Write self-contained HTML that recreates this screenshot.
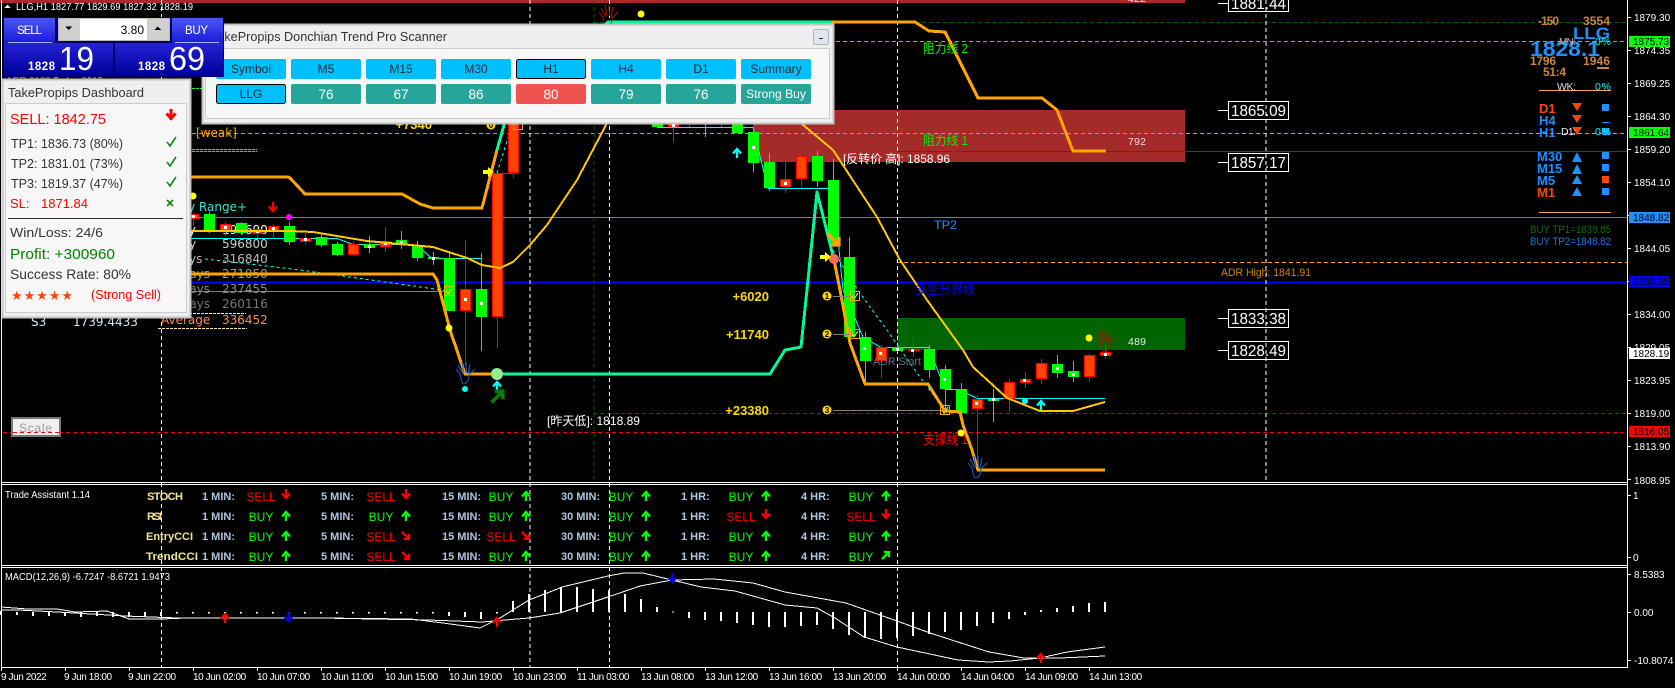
<!DOCTYPE html>
<html lang="en"><head><meta charset="utf-8"><title>LLG,H1 chart</title>
<style>
html,body{margin:0;padding:0;background:#000;width:1675px;height:688px;overflow:hidden}
svg{display:block;shape-rendering:crispEdges;font-family:"Liberation Sans","Noto Sans CJK SC",sans-serif}
.ax{font-size:10px;fill:#fff}
.tm{font-size:10px;fill:#fff;letter-spacing:-.42px}
.dj{font-family:"DejaVu Sans",sans-serif;font-size:12px}
.lb{font-size:11px;font-weight:bold;fill:#f0e68c}
.mn{font-size:11px;font-weight:bold;fill:#b0c4de}
.b{font-size:12px;fill:#00ff00;text-anchor:middle}
.s{font-size:12px;fill:#ff0000;text-anchor:middle}
.box{font-size:16px;fill:#fff}
.pf{font-size:12px;font-weight:bold;fill:#cd853f}
.tf{font-size:13px;font-weight:bold}
.gy{font-size:13px;font-weight:bold;fill:#ffd700;text-anchor:end}
.bt{font-size:12px;fill:#1c2c30;text-anchor:middle}
.bn{font-size:13.5px;fill:#fff;text-anchor:middle}
.d{font-size:13px;fill:#333}
</style></head>
<body>
<svg xmlns="http://www.w3.org/2000/svg" width="1675" height="688" viewBox="0 0 1675 688">
<defs>
<path id="u" fill="none" stroke-width="2.300" d="M0 5V-4M-4 .5L0 -4L4 .5"/>
<path id="d" fill="none" stroke-width="2.300" d="M0 -5V4M-4 -.5L0 4L4 -.5"/>
<path id="dr" fill="none" stroke-width="2.300" d="M-4 -4L3 3M3 -2V3H-2"/>
<path id="ur" fill="none" stroke-width="2.300" d="M-4 4L3 -3M-2 -3H3V2"/>
<path id="hand" fill="none" stroke-width="1" d="M-7 -7L-2 2M-3 -10L-1 1M1 -10L1.500 1M5 -8L3 2M10 -3L4 3C4 8 2 12 -2 12C-4 10 -4 5 -5 2L-9 -3"/>
</defs>
<rect width="1675" height="688" fill="#000"/>

<!-- zones -->
<rect x="0" y="0" width="1185" height="3" fill="#a52a2a"/>
<rect x="753" y="110" width="432" height="52" fill="#a52a2a"/>
<rect x="897" y="318" width="288" height="32" fill="#006400"/>

<!-- horizontal lines -->
<g fill="none" stroke-width="1">
<path d="M593 22.500H1627M593 413.500H1627" stroke="#006400" stroke-dasharray="4 3"/>
<path d="M3 41.500H1627M3 133.500H1627" stroke="#32e632" stroke-dasharray="4 3"/>
<path d="M192 88.500H202M192 149.500H257M192 151.500H257" stroke="#32e632" stroke-dasharray="3 1"/>
<path d="M897 151.500H1627" stroke="#006400"/>
<path d="M3 217.500H1627" stroke="#1e90ff"/>
<path d="M897 262.500H1627" stroke="#ffa500" stroke-dasharray="4 3"/>
<path d="M3 282.500H1627" stroke="#0000ff" stroke-width="2"/>
<path d="M192 291.500H449" stroke="#808080"/>
<path d="M3 432.500H1627" stroke="#ff0000" stroke-dasharray="4 3"/>
<path d="M594 0V482M897.500 0V482" stroke="#006400" stroke-dasharray="4 3"/>
</g>

<!-- left stats -->
<g class="dj">
<text x="247" y="211" text-anchor="end" fill="#40e0d0">Daily Range+</text>
<text x="196" y="137" fill="#ffa500">[weak]</text>
<text x="161" y="234" fill="#fff">Today</text><text x="222" y="234" fill="#fff">194600</text>
<text x="161" y="248" fill="#ccc">1 Day</text><text x="222" y="248" fill="#ccc">596800</text>
<text x="161" y="263" fill="#bbb">5 Days</text><text x="222" y="263" fill="#bbb">316840</text>
<text x="161" y="278" fill="#999">10 Days</text><text x="222" y="278" fill="#999">271050</text>
<text x="161" y="293" fill="#888">20 Days</text><text x="222" y="293" fill="#888">237455</text>
<text x="161" y="308" fill="#777">30 Days</text><text x="222" y="308" fill="#777">260116</text>
<text x="161" y="324" fill="#ff8c50">Average</text><text x="222" y="324" fill="#ff8c50">336452</text>
<text x="31" y="326" fill="#d4e6f1">S3</text><text x="73" y="326" fill="#d4e6f1">1739.4433</text>
</g>
<path d="M161 313.500H246M158 328.500H247" stroke="#ffe4b5" stroke-dasharray="3 1" fill="none"/>

<!-- dashed vertical whites -->
<path d="M161.500 0V667M530 0V667M609.500 0V667M897.500 0V667M1266 0V482" stroke="#fff" stroke-dasharray="4 3" fill="none"/>

<!-- cyan lines -->
<path fill="none" stroke="#00ffff" d="M180 238.500H337L353 244.500H413L420 248L432 258.500H481M657 127.500H753L768 188.500H833L843 290L863 337L881 347.500H929L945 389.500H960L977 398.500H1105"/>
<path fill="none" stroke="#ff0000" d="M497 173.500H518"/>
<path fill="none" stroke="#00ffff" stroke-dasharray="3 3" d="M205 259L233 262L300 270L449 291M497 173L512 125M833 250L853 283L870 307L887 330L903 353L922 380L945 410"/>

<!-- candle wicks -->
<path fill="none" stroke="#00ff00" d="M209.500 212V233M241.500 222V235M289.500 222V245M321.500 233V247M337.500 242V256M369.500 236V253M401.500 231V249M417.500 241V261M433.500 252V265M449.500 253V311M481.500 253V351M705.500 100V137M753.500 132V172M769.500 153V191M817.500 151V187M833.500 159V243M849.500 237V337M865.500 332V383M897.500 345V352M929.500 345V378M945.500 365V410M961.500 383V413M993.500 389V422M1057.500 355V378M1073.500 361V382"/>
<path fill="none" stroke="#ff0000" d="M193.500 212V226M225.500 222V236M257.500 226V238M273.500 224V239M305.500 233V245M353.500 241V256M385.500 227V252M465.500 240V366M497.500 173V348M513.500 100V178M673.500 115V143M689.500 100V127M721.500 100V127M785.500 162V193M801.500 153V187M881.500 345V378M913.500 336V357M977.500 395V470M1009.500 379V412M1025.500 372V388M1041.500 359V384M1089.500 353V382M1105.500 343V359"/>
<!-- candle bodies -->
<path fill="#00ff00" d="M204 214h11v17h-11zM236 223h11v10h-11zM284 226h11v16h-11zM316 237h11v8h-11zM332 244h11v11h-11zM364 244h11v4h-11zM396 240h11v5h-11zM412 246h11v12h-11zM428 257h11v2h-11zM444 258h11v53h-11zM476 289h11v28h-11zM652 100h11v27h-11zM732 100h11v33h-11zM748 132h11v31h-11zM764 162h11v26h-11zM812 156h11v25h-11zM828 180h11v63h-11zM844 257h11v80h-11zM860 337h11v24h-11zM892 347h11v4h-11zM924 349h11v21h-11zM940 369h11v20h-11zM956 389h11v24h-11zM988 399h11v2h-11zM1052 364h11v9h-11zM1068 371h11v6h-11z"/>
<path fill="#ff4500" stroke="#ff0000" d="M188.500 214.500h10v4h-10zM220.500 224.500h10v6h-10zM252.500 229.500h10v4h-10zM268.500 226.500h10v4h-10zM300.500 238.500h10v3h-10zM348.500 244.500h10v10h-10zM380.500 241.500h10v5h-10zM460.500 289.500h10v21h-10zM492.500 173.500h10v143h-10zM508.500 100.500h10v72h-10zM668.500 115.500h10v11h-10zM780.500 179.500h10v7h-10zM796.500 156.500h10v22h-10zM876.500 347.500h10v13h-10zM908.500 349.500h10v1h-10zM972.500 399.500h10v9h-10zM1004.500 382.500h10v16h-10zM1020.500 379.500h10v3h-10zM1036.500 363.500h10v15h-10zM1084.500 355.500h10v21h-10zM1100.500 352.500h10v3h-10z"/>
<!-- white dots -->
<path fill="#fff" d="M192 215h3v3h-3zM224 226h3v3h-3zM256 230h3v3h-3zM272 227h3v3h-3zM304 238h3v3h-3zM368 245h3v3h-3zM384 242h3v3h-3zM400 241h3v3h-3zM432 257h3v3h-3zM464 298h3v3h-3zM480 302h3v3h-3zM672 124h3v3h-3zM752 146h3v3h-3zM784 182h3v3h-3zM863 347h3v3h-3zM879 352h3v3h-3zM896 348h3v3h-3zM911 349h3v3h-3zM943 378h3v3h-3zM975 402h3v3h-3zM992 398h3v3h-3zM1023 379h3v3h-3zM1056 367h3v3h-3zM1072 373h3v3h-3zM1104 353h3v3h-3z"/>

<!-- thick indicator lines -->
<g fill="none" stroke-linejoin="round">
<polyline stroke="#ffc800" stroke-width="2" points="180,231 290,231 313,232 367,241 433,247 467,258 482,265 500,268 513,262 530,245 547,225 577,180 607,123 640,70 670,40"/>
<polyline stroke="#ffc800" stroke-width="2" points="802,124 833,150 877,217 900,260 927,300 963,350 973,367 1007,398 1040,411 1073,411 1105,402"/>
<polyline stroke="#ffa500" stroke-width="3" points="180,177 288,177 290,178 305,194 402,194 420,204 433,208 482,208 497,150"/>
<polyline stroke="#00fa9a" stroke-width="3" points="497,150 504,125 520,60 560,30 604,26 608,22 832,22"/>
<polyline stroke="#ffa500" stroke-width="3" points="832,22 915,22 929,31 945,32 978,98 1042,98 1057,110 1073,151 1106,151"/>
<polyline stroke="#ffa500" stroke-width="3" points="180,274 433,274 437,280 450,330 465,374 497,374"/>
<polyline stroke="#00fa9a" stroke-width="3" points="497,374 770,374 785,350 801,347 808,280 817,192 834,260"/>
<polyline stroke="#ffa500" stroke-width="3" points="834,260 840,290 850,343 865,384 928,384 945,411 960,412 963,425 972,450 978,470 1105,470"/>
</g>

<!-- markers -->
<g shape-rendering="auto">
<circle cx="193" cy="196" r="3.500" fill="#ffff00"/>
<circle cx="289" cy="217" r="3" fill="#ff00ff"/>
<circle cx="449" cy="328" r="3.500" fill="#ffff00"/>
<circle cx="465" cy="389" r="3" fill="#00ffff"/>
<circle cx="497" cy="374" r="6" fill="#90ee90"/>
<circle cx="641" cy="14" r="3.500" fill="#ffff00"/>
<circle cx="834" cy="259" r="5" fill="#fa6a5a"/>
<circle cx="961" cy="433" r="3.500" fill="#ffff00"/>
<circle cx="1025" cy="401" r="3" fill="#00ffff"/>
<circle cx="1089" cy="338" r="3.500" fill="#ffff00"/>
<use href="#d" x="273" y="207" stroke="#ff0000"/>
<use href="#u" x="497" y="386" stroke="#00ffff"/>
<use href="#u" x="737" y="153" stroke="#00ffff"/>
<use href="#u" x="1041" y="405" stroke="#00ffff"/>
<g transform="translate(498 396) scale(1.600)"><use href="#ur" stroke="#0a7a0a"/></g>
<g transform="translate(834 240) scale(1.600)"><use href="#dr" stroke="#ffa500"/></g>
<path d="M483 170h5v-3l6 5l-6 5v-3h-5z" fill="#ffff00"/>
<path d="M820 255h5v-3l6 5l-6 5v-3h-5z" fill="#ffff00"/>
<use href="#hand" x="465" y="372" stroke="#1e5fd0"/>
<use href="#hand" x="977" y="466" stroke="#1e5fd0"/>
<use href="#hand" x="1105" y="340" stroke="#b01a00"/>
<use href="#hand" x="608" y="15" stroke="#b01a00"/>
</g>
<!-- numbered + check markers -->
<path d="M833 296.500H850M833 334.500H850M833 410.500H945" stroke="#808080" fill="none"/>
<g fill="none" stroke="#ffa500">
<rect x="850.500" y="291.500" width="9" height="9"/><rect x="850.500" y="329.500" width="9" height="9"/><rect x="940.500" y="405.500" width="9" height="9"/>
<rect x="444.500" y="286.500" width="9" height="9" stroke="#c8c800"/><rect x="513.500" y="120.500" width="9" height="9"/>
</g>
<path fill="none" stroke="#e8e800" d="M852 296l2 3l4 -6M852 334l2 3l4 -6M942 410l2 3l4 -6M446 291l2 3l4 -6"/>
<g shape-rendering="auto">
<circle cx="827" cy="296" r="4.500" fill="#ffd700"/><circle cx="827" cy="334" r="4.500" fill="#ffd700"/><circle cx="827" cy="410" r="4.500" fill="#ffd700"/><circle cx="491" cy="125" r="4.500" fill="#ffd700"/>
</g>
<g font-size="8" font-weight="bold" fill="#000" text-anchor="middle">
<text x="827" y="299">1</text><text x="827" y="337">2</text><text x="827" y="413">3</text><text x="491" y="128">0</text>
</g>
<text x="769" y="301" class="gy">+6020</text>
<text x="769" y="339" class="gy">+11740</text>
<text x="769" y="415" class="gy">+23380</text>
<text x="432" y="129" class="gy">+7340</text>

<!-- chart labels -->
<text x="923" y="53" font-size="13" fill="#00f000" textLength="45" lengthAdjust="spacingAndGlyphs">阻力线 2</text>
<text x="923" y="145" font-size="13" fill="#00f000" textLength="45" lengthAdjust="spacingAndGlyphs">阻力线 1</text>
<text x="843" y="163" font-size="12" fill="#fff" textLength="107" lengthAdjust="spacingAndGlyphs">[反转价 高]: 1858.96</text>
<text x="547" y="425" font-size="12" fill="#fff" textLength="93" lengthAdjust="spacingAndGlyphs">[昨天低]: 1818.89</text>
<text x="923" y="444" font-size="13" fill="#ff0000" textLength="45" lengthAdjust="spacingAndGlyphs">支撑线 1</text>
<text x="934" y="229" font-size="12" fill="#1e90ff" textLength="23" lengthAdjust="spacingAndGlyphs">TP2</text>
<text x="915" y="294" font-size="13" fill="#0000ff" textLength="60" lengthAdjust="spacingAndGlyphs">多空分界线</text>
<text x="873" y="365" font-size="11" fill="#5a7585" textLength="48" lengthAdjust="spacingAndGlyphs">ADR Start</text>
<text x="1221" y="276" font-size="11" fill="#cc8800" textLength="90" lengthAdjust="spacingAndGlyphs">ADR High: 1841.91</text>
<text x="1128" y="145" font-size="10.500" fill="#f0e0e0" textLength="18">792</text>
<text x="1128" y="345" font-size="10.500" fill="#e8f5e8" textLength="18">489</text>
<text x="1128" y="2" font-size="10.500" fill="#f0e0e0" textLength="18">422</text>

<!-- boxed right levels -->
<path d="M1218 3.500H1228M1218 110.500H1228M1218 162.500H1228M1218 318.500H1228M1218 350.500H1228" stroke="#fff" fill="none"/>
<g fill="#000" stroke="#fff">
<rect x="1228.500" y="-6.500" width="60" height="18"/>
<rect x="1228.500" y="101.500" width="60" height="18"/>
<rect x="1228.500" y="153.500" width="60" height="18"/>
<rect x="1228.500" y="309.500" width="60" height="18"/>
<rect x="1228.500" y="341.500" width="60" height="18"/>
</g>
<text class="box" x="1231" y="9" textLength="55" lengthAdjust="spacingAndGlyphs">1881.44</text>
<text class="box" x="1231" y="116" textLength="55" lengthAdjust="spacingAndGlyphs">1865.09</text>
<text class="box" x="1231" y="168" textLength="55" lengthAdjust="spacingAndGlyphs">1857.17</text>
<text class="box" x="1231" y="324" textLength="55" lengthAdjust="spacingAndGlyphs">1833.38</text>
<text class="box" x="1231" y="356" textLength="55" lengthAdjust="spacingAndGlyphs">1828.49</text>
<path d="M1266 0V482" stroke="#fff" stroke-dasharray="4 3" fill="none"/>

<!-- right info block -->
<text class="pf" x="1538" y="25" textLength="21">-150</text><text class="pf" x="1583" y="25" textLength="27">3554</text>
<text x="1573" y="39" font-size="17" font-weight="bold" fill="#1e90ff" textLength="37" lengthAdjust="spacingAndGlyphs">LLG</text>
<text x="1530" y="56" font-size="21" font-weight="bold" fill="#1e90ff" textLength="70" lengthAdjust="spacingAndGlyphs">1828.1</text>
<text x="1559" y="45" font-size="10" fill="#b8b8b8" textLength="17">MN:</text><text x="1595" y="45" font-size="10.500" fill="#00ffff" textLength="16">0 %</text>
<text class="pf" x="1530" y="65" textLength="26">1796</text><text class="pf" x="1583" y="65" textLength="27">1946</text>
<text class="pf" x="1543" y="76" textLength="23">51:4</text>
<rect x="1597" y="67" width="12" height="2" fill="#cd853f"/>
<text x="1557" y="90" font-size="10.500" fill="#dcdcdc" textLength="19">WK:</text><text x="1595" y="90" font-size="10.500" fill="#00ffff" textLength="16">0 %</text>
<path d="M1539 90.500H1611M1539 212.500H1611" stroke="#f4a460" fill="none"/>
<g class="tf">
<text x="1539" y="113" fill="#ff4500">D1</text><text x="1539" y="125" fill="#1e90ff">H4</text><text x="1539" y="137" fill="#1e90ff">H1</text>
<text x="1537" y="161" fill="#1e90ff">M30</text><text x="1537" y="173" fill="#1e90ff">M15</text><text x="1537" y="185" fill="#1e90ff">M5</text><text x="1537" y="197" fill="#ff4500">M1</text>
</g>
<g shape-rendering="auto">
<path fill="#ff4500" d="M1572 103h10l-5 8zM1572 115h10l-5 8zM1572 127h10l-5 8z"/>
<path fill="#1e90ff" d="M1572 162l5 -10l5 10zM1572 174l5 -10l5 10zM1572 184l5 -9l5 9zM1572 196l5 -9l5 9z"/>
</g>
<path fill="#1e90ff" d="M1602 104h7v7h-7zM1602 122h7v1h-7zM1602 128h7v7h-7zM1602 152h7v7h-7zM1602 164h7v7h-7zM1602 188h7v7h-7z"/>
<rect x="1602" y="176" width="7" height="7" fill="#ff4500"/>
<text x="1561" y="135" font-size="10.500" fill="#f0f0f0" textLength="15">D1:</text><text x="1595" y="135" font-size="10.500" fill="#00ffff" textLength="16">0 %</text>
<text x="1530" y="233" font-size="11" fill="#0d6b0d" textLength="81" lengthAdjust="spacingAndGlyphs">BUY TP1=1838.85</text>
<text x="1530" y="245" font-size="11" fill="#1e78d8" textLength="81" lengthAdjust="spacingAndGlyphs">BUY TP2=1848.82</text>

<!-- frame lines -->
<path d="M1.500 0V667M1627.500 0V668" stroke="#fff" fill="none"/>
<path d="M1 482.500H1628M1 484.500H1628M1 565.500H1628M1 567.500H1628M1 667.500H1628" stroke="#fff" fill="none"/>
<!-- price axis -->
<path stroke="#fff" fill="none" d="M1628 17.500h3M1628 50.500h3M1628 83.500h3M1628 116.500h3M1628 149.500h3M1628 182.500h3M1628 215.500h3M1628 248.500h3M1628 281.500h3M1628 314.500h3M1628 347.500h3M1628 380.500h3M1628 413.500h3M1628 446.500h3M1628 479.500h3M1628 495.500h3M1628 557.500h3M1628 574.500h3M1628 612.500h3M1628 660.500h3"/>
<text class="ax" x="1634" y="21">1879.30</text><text class="ax" x="1634" y="54">1874.35</text><text class="ax" x="1634" y="87">1869.25</text><text class="ax" x="1634" y="120">1864.30</text><text class="ax" x="1634" y="153">1859.20</text><text class="ax" x="1634" y="186">1854.10</text><text class="ax" x="1634" y="252">1844.05</text><text class="ax" x="1634" y="318">1834.00</text><text class="ax" x="1634" y="351">1829.05</text><text class="ax" x="1634" y="384">1823.95</text><text class="ax" x="1634" y="417">1819.00</text><text class="ax" x="1634" y="450">1813.90</text><text class="ax" x="1634" y="484">1808.95</text>
<rect x="1629" y="36" width="41" height="11" fill="#00ff00"/><text class="ax" x="1633" y="45" style="fill:#000">1875.73</text>
<rect x="1629" y="127" width="41" height="11" fill="#00ff00"/><text class="ax" x="1633" y="136" style="fill:#000">1861.64</text>
<rect x="1629" y="212" width="41" height="11" fill="#1e90ff"/><text class="ax" x="1633" y="221" style="fill:#000">1848.82</text>
<rect x="1629" y="276" width="41" height="11" fill="#0000ff"/><text class="ax" x="1633" y="285" style="fill:#000">1838.85</text>
<rect x="1629" y="348" width="41" height="11" fill="#fff"/><text class="ax" x="1633" y="357" style="fill:#000">1828.19</text>
<rect x="1629" y="426" width="41" height="11" fill="#ff0000"/><text class="ax" x="1633" y="435" style="fill:#000">1816.05</text>
<text class="ax" x="1633" y="499">1</text><text class="ax" x="1633" y="561">0</text>
<text class="ax" x="1634" y="578">8.5383</text><text class="ax" x="1634" y="616">0.00</text><text class="ax" x="1634" y="664">-10.8074</text>

<!-- Trade Assistant -->
<text x="5" y="498" font-size="10" fill="#fff" textLength="85" lengthAdjust="spacingAndGlyphs">Trade Assistant 1.14</text>
<text class="lb" x="147" y="500" textLength="36">STOCH</text><text class="lb" x="147" y="520" textLength="15">RSI</text><text class="lb" x="146" y="540" textLength="47" lengthAdjust="spacingAndGlyphs">EntryCCI</text><text class="lb" x="146" y="560" textLength="52" lengthAdjust="spacingAndGlyphs">TrendCCI</text>

<g class="mn">
<text x="202" y="500">1 MIN:</text><text x="321" y="500">5 MIN:</text><text x="442" y="500">15 MIN:</text><text x="561" y="500">30 MIN:</text><text x="681" y="500">1 HR:</text><text x="801" y="500">4 HR:</text>
<text x="202" y="520">1 MIN:</text><text x="321" y="520">5 MIN:</text><text x="442" y="520">15 MIN:</text><text x="561" y="520">30 MIN:</text><text x="681" y="520">1 HR:</text><text x="801" y="520">4 HR:</text>
<text x="202" y="540">1 MIN:</text><text x="321" y="540">5 MIN:</text><text x="442" y="540">15 MIN:</text><text x="561" y="540">30 MIN:</text><text x="681" y="540">1 HR:</text><text x="801" y="540">4 HR:</text>
<text x="202" y="560">1 MIN:</text><text x="321" y="560">5 MIN:</text><text x="442" y="560">15 MIN:</text><text x="561" y="560">30 MIN:</text><text x="681" y="560">1 HR:</text><text x="801" y="560">4 HR:</text>
</g>
<text class="s" x="261" y="501">SELL</text><text class="s" x="381" y="501">SELL</text><text class="b" x="501" y="501">BUY</text><text class="b" x="621" y="501">BUY</text><text class="b" x="741" y="501">BUY</text><text class="b" x="861" y="501">BUY</text>
<text class="b" x="261" y="521">BUY</text><text class="b" x="381" y="521">BUY</text><text class="b" x="501" y="521">BUY</text><text class="b" x="621" y="521">BUY</text><text class="s" x="741" y="521">SELL</text><text class="s" x="861" y="521">SELL</text>
<text class="b" x="261" y="541">BUY</text><text class="s" x="381" y="541">SELL</text><text class="s" x="501" y="541">SELL</text><text class="b" x="621" y="541">BUY</text><text class="b" x="741" y="541">BUY</text><text class="b" x="861" y="541">BUY</text>
<text class="b" x="261" y="561">BUY</text><text class="s" x="381" y="561">SELL</text><text class="b" x="501" y="561">BUY</text><text class="b" x="621" y="561">BUY</text><text class="b" x="741" y="561">BUY</text><text class="b" x="861" y="561">BUY</text>
<g shape-rendering="auto">
<use href="#d" x="286" y="494" stroke="#ff0000"/><use href="#d" x="406" y="494" stroke="#ff0000"/><use href="#u" x="526" y="496" stroke="#00ff00"/><use href="#u" x="646" y="496" stroke="#00ff00"/><use href="#u" x="766" y="496" stroke="#00ff00"/><use href="#u" x="886" y="496" stroke="#00ff00"/>
<use href="#u" x="286" y="516" stroke="#00ff00"/><use href="#u" x="406" y="516" stroke="#00ff00"/><use href="#u" x="526" y="516" stroke="#00ff00"/><use href="#u" x="646" y="516" stroke="#00ff00"/><use href="#d" x="766" y="514" stroke="#ff0000"/><use href="#d" x="886" y="514" stroke="#ff0000"/>
<use href="#u" x="286" y="536" stroke="#00ff00"/><use href="#dr" x="406" y="536" stroke="#ff0000"/><use href="#dr" x="526" y="536" stroke="#ff0000"/><use href="#u" x="646" y="536" stroke="#00ff00"/><use href="#u" x="766" y="536" stroke="#00ff00"/><use href="#u" x="886" y="536" stroke="#00ff00"/>
<use href="#u" x="286" y="556" stroke="#00ff00"/><use href="#dr" x="406" y="556" stroke="#ff0000"/><use href="#u" x="526" y="556" stroke="#00ff00"/><use href="#u" x="646" y="556" stroke="#00ff00"/><use href="#u" x="766" y="556" stroke="#00ff00"/><use href="#ur" x="886" y="555" stroke="#00ff00"/>
</g>

<!-- MACD -->
<text x="5" y="580" font-size="10" fill="#fff" textLength="165" lengthAdjust="spacingAndGlyphs">MACD(12,26,9) -6.7247 -8.6721 1.9473</text>
<path stroke="#fff" stroke-width="2" fill="none" d="M1 611V615M17 612V615M33 612V616M49 612V616M65 612V616M81 612V617M97 612V616M113 612V617M129 612V617M145 612V617M161 612V616M177 612V613.500M193 612V613.500M209 612V613.500M225 612V613.500M241 612V613.500M257 612V613.500M273 612V613.500M289 612V613.500M305 612V613.500M321 612V613.500M337 612V613.500M353 612V613.500M369 612V613.500M385 612V613.500M401 612V613.500M417 612V613.500M433 612V613.500M449 612V616M465 612V617M481 612V619M497 612V613.500M513 601V612M529 594V612M545 590V612M561 587V612M577 587V612M593 589V612M609 590V612M625 594V612M641 599V612M657 607V612M673 611.500V612.500M689 612V618M705 612V620M721 612V621M737 612V623M753 612V625M769 612V627M785 612V627M801 612V626M817 612V625M833 612V629M849 612V635M865 612V638M881 612V639M897 612V638M913 612V636M929 612V634M945 612V632M961 612V630M977 612V626M993 612V623M1009 612V619M1025 612V615M1041 610V612M1057 608V612M1073 606V612M1089 603V612M1105 602V612"/>
<polyline fill="none" stroke="#fff" points="1,607 27,609 57,609 75,612 107,611 129,619 161,619 186,618 321,618 411,619 443,623 480,628 500,618 529,600 560,588 562,587 608,576 624,573 643,573 672,580 701,587 735,591 785,605 817,608 835,618 864,637 897,647 958,660 989,662 1010,661 1040,658 1067,652 1105,647"/>
<polyline fill="none" stroke="#fff" points="1,610 18,610 57,612 125,616 178,618 321,618 428,620 482,622 529,618 560,613 608,597 640,586 672,580 714,579 753,583 785,592 846,603 897,621 930,633 989,652 1024,658 1060,658 1105,656"/>
<g shape-rendering="auto">
<use href="#u" x="225" y="618" stroke="#ff0000"/><use href="#d" x="288.500" y="617" stroke="#0000ff"/><use href="#u" x="497" y="622" stroke="#ff0000"/><use href="#d" x="672.500" y="578" stroke="#0000ff"/><use href="#u" x="1041" y="658" stroke="#ff0000"/>
</g>

<!-- time axis -->
<path stroke="#fff" fill="none" d="M1.500 668v3M65.500 668v3M129.500 668v3M193.500 668v3M257.500 668v3M321.500 668v3M385.500 668v3M449.500 668v3M513.500 668v3M577.500 668v3M641.500 668v3M705.500 668v3M769.500 668v3M833.500 668v3M897.500 668v3M961.500 668v3M1025.500 668v3M1089.500 668v3"/>
<g class="tm">
<text x="1" y="680">9 Jun 2022</text><text x="64" y="680">9 Jun 18:00</text><text x="128" y="680">9 Jun 22:00</text><text x="193" y="680">10 Jun 02:00</text><text x="257" y="680">10 Jun 07:00</text><text x="321" y="680">10 Jun 11:00</text><text x="385" y="680">10 Jun 15:00</text><text x="449" y="680">10 Jun 19:00</text><text x="513" y="680">10 Jun 23:00</text><text x="577" y="680">11 Jun 03:00</text><text x="641" y="680">13 Jun 08:00</text><text x="705" y="680">13 Jun 12:00</text><text x="769" y="680">13 Jun 16:00</text><text x="833" y="680">13 Jun 20:00</text><text x="897" y="680">14 Jun 00:00</text><text x="961" y="680">14 Jun 04:00</text><text x="1025" y="680">14 Jun 09:00</text><text x="1089" y="680">14 Jun 13:00</text>
</g>

<!-- header -->
<path d="M4 8l3.500 -3l3.500 3z" fill="#fff"/>
<text x="16" y="10" font-size="10" fill="#fff" textLength="177" lengthAdjust="spacingAndGlyphs">LLG,H1  1827.77 1829.69 1827.32 1828.19</text>
<text x="6" y="84" font-size="10" fill="#999" textLength="97" lengthAdjust="spacingAndGlyphs">ADR:3168  Today:2315</text>

<!-- Scale button -->
<rect x="12" y="418" width="48" height="18" fill="#f0f0f0" stroke="#777" stroke-width="2"/>
<text x="19" y="432" font-size="12" fill="#999" textLength="33">Scale</text>
<path d="M13 432.500H60" stroke="#ff0000" stroke-dasharray="4 3" fill="none"/>

<!-- Scanner panel -->
<rect x="202.500" y="24.500" width="631" height="99" fill="#efefef" stroke="#c4c4c4" stroke-width="2"/>
<rect x="205.500" y="48.500" width="624" height="70" fill="#f7f7f7" stroke="#cccccc"/>
<text x="211" y="41" font-size="13" fill="#333" textLength="236" lengthAdjust="spacingAndGlyphs">TakePropips Donchian Trend Pro Scanner</text>
<rect x="813.500" y="29.500" width="15" height="15" rx="2" fill="#dfe6ee" stroke="#a8b4c0"/>
<path d="M819 38.500h4" stroke="#333"/>
<g fill="#00bfff" shape-rendering="auto">
<rect x="216" y="59" width="70" height="20" rx="2"/><rect x="291" y="59" width="70" height="20" rx="2"/><rect x="366" y="59" width="70" height="20" rx="2"/><rect x="441" y="59" width="70" height="20" rx="2"/><rect x="516.500" y="59.500" width="69" height="19" rx="2" stroke="#000"/><rect x="591" y="59" width="70" height="20" rx="2"/><rect x="666" y="59" width="70" height="20" rx="2"/><rect x="741" y="59" width="70" height="20" rx="2"/>
<rect x="216.500" y="84.500" width="69" height="19" rx="2" stroke="#000"/>
</g>
<g fill="#26a69a" shape-rendering="auto">
<rect x="291" y="84" width="70" height="20" rx="2"/><rect x="366" y="84" width="70" height="20" rx="2"/><rect x="441" y="84" width="70" height="20" rx="2"/><rect x="516" y="84" width="70" height="20" rx="2" fill="#ef5350"/><rect x="591" y="84" width="70" height="20" rx="2"/><rect x="666" y="84" width="70" height="20" rx="2"/><rect x="741" y="84" width="70" height="20" rx="2"/>
</g>
<text class="bt" x="251" y="73">Symbol</text><text class="bt" x="326" y="73">M5</text><text class="bt" x="401" y="73">M15</text><text class="bt" x="476" y="73">M30</text><text class="bt" x="551" y="73">H1</text><text class="bt" x="626" y="73">H4</text><text class="bt" x="701" y="73">D1</text><text class="bt" x="776" y="73">Summary</text>
<text class="bt" x="251" y="98">LLG</text><text class="bn" x="326" y="99">76</text><text class="bn" x="401" y="99">67</text><text class="bn" x="476" y="99">86</text><text class="bn" x="551" y="99">80</text><text class="bn" x="626" y="99">79</text><text class="bn" x="701" y="99">76</text>
<text x="776" y="98" font-size="12" fill="#fff" text-anchor="middle" textLength="60" lengthAdjust="spacingAndGlyphs">Strong Buy</text>

<!-- Dashboard -->
<rect x="2.500" y="79.500" width="188" height="238" fill="#efefef" stroke="#c4c4c4" stroke-width="2"/>
<rect x="5.500" y="103.500" width="181" height="209" fill="#f7f7f7" stroke="#cccccc"/>
<text class="d" x="8" y="97" textLength="136" lengthAdjust="spacingAndGlyphs">TakePropips Dashboard</text>
<text x="10" y="124" font-size="14.500" fill="#ff0000" textLength="96" lengthAdjust="spacingAndGlyphs">SELL: 1842.75</text>
<path d="M171 109v9M166.500 113.500l4.500 5l4.500 -5" stroke="#ff0000" stroke-width="3" fill="none"/>
<text class="d" x="11" y="148" textLength="112" lengthAdjust="spacingAndGlyphs">TP1: 1836.73 (80%)</text>
<text class="d" x="11" y="168" textLength="112" lengthAdjust="spacingAndGlyphs">TP2: 1831.01 (73%)</text>
<text class="d" x="11" y="188" textLength="112" lengthAdjust="spacingAndGlyphs">TP3: 1819.37 (47%)</text>
<text x="10" y="208" font-size="13" fill="#ff0000">SL:</text><text x="41" y="208" font-size="13" fill="#ff0000" textLength="47">1871.84</text>
<g fill="none" stroke="#0a8a0a" stroke-width="1.600" shape-rendering="auto">
<path d="M167 142l3 4l6 -9M167 162l3 4l6 -9M167 182l3 4l6 -9"/>
<path d="M167 200l6 6M173 200l-6 6"/>
</g>
<path d="M8 218.500H183" stroke="#3a2a2a" fill="none"/>
<text class="d" x="10" y="237" textLength="93" lengthAdjust="spacingAndGlyphs">Win/Loss: 24/6</text>
<text x="10" y="259" font-size="15" fill="#008000" textLength="105" lengthAdjust="spacingAndGlyphs">Profit: +300960</text>
<text x="10" y="279" font-size="14" fill="#333" textLength="121" lengthAdjust="spacingAndGlyphs">Success Rate: 80%</text>
<text x="11" y="300" font-size="13" fill="#ff4500" textLength="62" font-family="DejaVu Sans">★★★★★</text>
<text x="91" y="299" font-size="13" fill="#ff0000" textLength="70" lengthAdjust="spacingAndGlyphs">(Strong Sell)</text>

<!-- one-click trading panel -->
<defs>
<linearGradient id="g1" x1="0" y1="0" x2="0" y2="1"><stop offset="0" stop-color="#4a58f5"/><stop offset="1" stop-color="#1a1ad8"/></linearGradient>
<linearGradient id="g2" x1="0" y1="0" x2="0" y2="1"><stop offset="0" stop-color="#2424d6"/><stop offset="1" stop-color="#00009a"/></linearGradient>
</defs>
<rect x="3" y="17" width="221" height="60" fill="#000066"/>
<rect x="4" y="18" width="51" height="25" fill="url(#g1)"/>
<rect x="172" y="18" width="51" height="25" fill="url(#g1)"/>
<path d="M8 42.500H52M175 42.500H219" stroke="#a8b4ff" fill="none"/>
<rect x="4" y="43" width="109" height="32" fill="url(#g2)"/>
<rect x="115" y="43" width="108" height="32" fill="url(#g2)"/>
<text x="17" y="34" font-size="11.500" fill="#fff" textLength="25">SELL</text>
<text x="185" y="34" font-size="11.500" fill="#fff" textLength="23">BUY</text>
<rect x="58" y="18" width="112" height="23" fill="#d0d0d0" stroke="#000" stroke-opacity=".2"/>
<rect x="80" y="19" width="67" height="21" fill="#fff"/>
<path d="M65 26.500h7l-3.500 3.500zM154 30h7l-3.500 -3.500z" fill="#000"/>
<text x="144" y="34" font-size="12" fill="#000" text-anchor="end">3.80</text>
<text x="28" y="70" font-size="11.500" font-weight="bold" fill="#fff" textLength="27">1828</text>
<text x="59" y="70" font-size="33" fill="#fff" textLength="35" lengthAdjust="spacingAndGlyphs">19</text>
<text x="138" y="70" font-size="11.500" font-weight="bold" fill="#fff" textLength="27">1828</text>
<text x="169" y="70" font-size="33" fill="#fff" textLength="36" lengthAdjust="spacingAndGlyphs">69</text>
</svg>
</body></html>
